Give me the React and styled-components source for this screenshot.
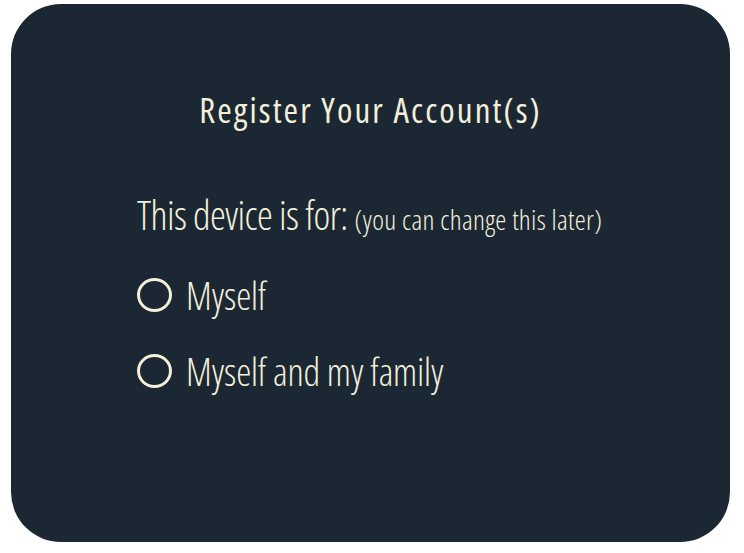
import React, { useState } from "react";
import styled, { createGlobalStyle } from "styled-components";

const GlobalStyle = createGlobalStyle`
  html, body { margin: 0; padding: 0; background: #ffffff; }
  body { font-family: "Open Sans", "DejaVu Sans", sans-serif; }
`;

const Page = styled.div`
  padding: 4px 0 0 11px;
`;

const Card = styled.section`
  box-sizing: border-box;
  width: 719px;
  height: 538px;
  border-radius: 50px;
  background: #1c2734;
  color: #f3efd9;
  font-family: "Open Sans", sans-serif;
  font-stretch: condensed;
  display: flex;
  flex-direction: column;
  padding: 86px 0 0 126px;
`;

const Title = styled.h1`
  margin: 0 0 0 -126px;
  text-align: center;
  font-size: 35px;
  font-weight: 500;
  line-height: 40px;
  letter-spacing: 2.1px;
`;

const Prompt = styled.p`
  margin: 59px 0 0;
  font-size: 40px;
  font-weight: 300;
  line-height: 52px;
  letter-spacing: -0.6px;
  white-space: nowrap;
`;

const Note = styled.span`
  font-size: 28px;
  letter-spacing: 0.3px;
`;

const Options = styled.div`
  display: flex;
  flex-direction: column;
  gap: 24px;
  margin-top: 24px;
`;

const Option = styled.label`
  display: flex;
  align-items: center;
  gap: 14px;
  cursor: pointer;
  font-size: 38px;
  font-weight: 300;
  line-height: 52px;
  letter-spacing: -0.2px;
`;

const Radio = styled.span`
  box-sizing: border-box;
  width: 35px;
  height: 34px;
  border-radius: 50%;
  border: 3px solid #f3efd9;
  flex: none;
  display: flex;
  align-items: center;
  justify-content: center;
  &::after {
    content: "";
    width: 16px;
    height: 16px;
    border-radius: 50%;
    background: ${(p) => (p.$checked ? "#f3efd9" : "transparent")};
  }
`;

const options = ["Myself", "Myself and my family"];

export default function App() {
  const [sel, setSel] = useState(null);
  return (
    <Page>
      <GlobalStyle />
      <Card>
        <Title>Register Your Account(s)</Title>
        <Prompt>
          This device is for: <Note>(you can change this later)</Note>
        </Prompt>
        <Options>
          {options.map((o) => (
            <Option key={o} onClick={() => setSel(o)}>
              <Radio $checked={sel === o} />
              {o}
            </Option>
          ))}
        </Options>
      </Card>
    </Page>
  );
}
